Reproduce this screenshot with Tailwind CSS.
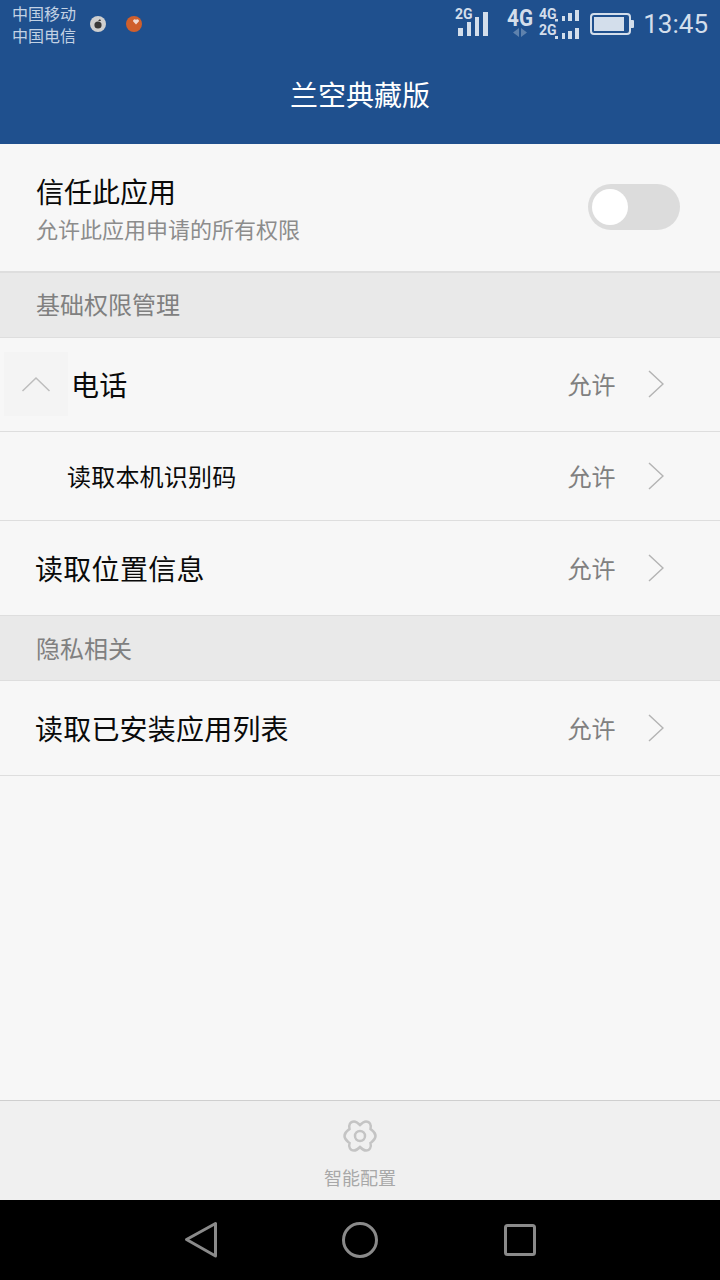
<!DOCTYPE html>
<html lang="zh-CN">
<head>
    <meta charset="UTF-8">
    <meta name="viewport" content="width=device-width, initial-scale=1.0">
    <title>兰空典藏版</title>
    <script src="https://cdn.jsdelivr.net/npm/@tailwindcss/browser@4"></script>
</head>
<body class="w-[720px] h-[1280px] overflow-hidden flex flex-col bg-[#f7f7f7] font-['Noto_Sans_CJK_SC','Liberation_Sans',sans-serif]">

    <!-- status bar + title -->
    <header class="h-[144px] shrink-0 bg-[#1f508e] flex flex-col">
        <div class="h-[48px] flex items-center pl-[12px] pr-[12px] text-[#c3d2e4]">
            <div class="text-[16px] leading-[22px] w-[64px]">
                <div>中国移动</div>
                <div>中国电信</div>
            </div>
            <svg class="ml-[13px] mb-[1px]" width="18" height="18" viewBox="0 0 18 18">
                <circle cx="9" cy="9" r="8" fill="#cfcfcf"/>
                <circle cx="9" cy="10" r="3.6" fill="#3a3a3a"/>
                <path d="M9 6l2-2 1 2z" fill="#3a3a3a"/>
            </svg>
            <svg class="ml-[18px] mb-[1px]" width="18" height="18" viewBox="0 0 18 18">
                <circle cx="9" cy="9" r="8" fill="#cf5f2c"/>
                <path d="M11 9.5L8 6.2a1.8 1.8 0 0 1 3-1.5 1.8 1.8 0 0 1 3 1.5z" fill="#efd9d2"/>
            </svg>
            <svg class="ml-auto" width="136" height="48" viewBox="0 0 136 48">
                <text x="1" y="19" font-size="14" font-weight="700" font-family="Roboto" fill="#d3deeb">2G</text>
                <g fill="#d3deeb">
                    <rect x="4" y="28" width="5" height="8"/>
                    <rect x="13" y="22" width="4" height="14"/>
                    <rect x="21" y="17" width="4" height="19"/>
                    <rect x="29" y="12" width="5" height="24"/>
                </g>
                <text x="53" y="26" font-size="24" font-weight="700" font-family="Roboto" textLength="26" lengthAdjust="spacingAndGlyphs" fill="#d3deeb">4G</text>
                <path d="M65 28v9l-6-4.500zM67 28v9l6-4.500z" fill="#5f82ad"/>
                <text x="85" y="19" font-size="14" font-weight="700" font-family="Roboto" fill="#d3deeb">4G</text>
                <text x="85" y="35" font-size="14" font-weight="700" font-family="Roboto" fill="#d3deeb">2G</text>
                <g fill="#d3deeb">
                    <rect x="101" y="19" width="3" height="2.500"/>
                    <rect x="108" y="16" width="3" height="5"/>
                    <rect x="114" y="13" width="4" height="8"/>
                    <rect x="121" y="10" width="4" height="11"/>
                    <rect x="101" y="36" width="3" height="3"/>
                    <rect x="108" y="33" width="3" height="6"/>
                    <rect x="114" y="31" width="4" height="8"/>
                    <rect x="121" y="28" width="4" height="11"/>
                </g>
            </svg>
            <svg class="ml-[-1px]" width="45" height="24" viewBox="0 0 45 24">
                <rect x="2" y="2" width="39" height="20" rx="3" fill="none" stroke="#d3deeb" stroke-width="2"/>
                <rect x="5" y="5" width="30" height="14" fill="#d3deeb"/>
                <path d="M42 8h2a1 1 0 0 1 1 1v6a1 1 0 0 1-1 1h-2z" fill="#d3deeb"/>
            </svg>
            <span class="ml-[9px] text-[26px] leading-[30px] font-['Roboto'] text-[#d3deeb]">13:45</span>
        </div>
        <h1 class="text-[28px] leading-[40px] mt-[26px] text-center text-white">兰空典藏版</h1>
    </header>

    <main class="flex-1 flex flex-col">
        <!-- trust switch -->
        <section class="h-[129px] shrink-0 flex items-center pl-[36px] pr-[40px] border-b-2 border-[#dedede]">
            <div class="flex-1">
                <div class="text-[28px] leading-[38px] text-[#0a0a0a]">信任此应用</div>
                <div class="text-[22px] leading-[32px] mt-[2px] text-[#8c8c8c]">允许此应用申请的所有权限</div>
            </div>
            <div class="w-[92px] h-[46px] rounded-full bg-[#dcdcdc] flex items-center pl-[4px] mb-[1px]">
                <div class="w-[36px] h-[36px] rounded-full bg-white"></div>
            </div>
        </section>

        <div class="h-[65px] shrink-0 flex items-center pl-[36px] pb-[2px] bg-[#e9e9e9] border-b border-[#dedede] text-[24px] text-[#808080]">基础权限管理</div>

        <div class="h-[94px] shrink-0 flex items-center pl-[4px] pr-[56px] pb-[2px] border-b border-[#dedede]">
            <div class="w-[64px] h-[64px] bg-[#f4f4f4] flex items-center justify-center">
                <svg width="30" height="18" viewBox="0 0 30 18"><path d="M1.500 16L15 3l13.500 13" fill="none" stroke="#bdbdbd" stroke-width="1.500"/></svg>
            </div>
            <span class="ml-[3px] text-[28px] tracking-[0.3px] text-[#0a0a0a] flex-1">电话</span>
            <span class="text-[24px] text-[#808080]">允许</span>
            <svg class="ml-[32.5px]" width="16" height="28" viewBox="0 0 16 28"><path d="M1 1l14 13L1 27" fill="none" stroke="#b4b4b4" stroke-width="1.500"/></svg>
        </div>

        <div class="h-[89px] shrink-0 flex items-center pl-[67px] pr-[56px] border-b border-[#dedede]">
            <span class="text-[24px] tracking-[0.2px] text-[#0a0a0a] flex-1">读取本机识别码</span>
            <span class="text-[24px] text-[#808080]">允许</span>
            <svg class="ml-[32.5px]" width="16" height="28" viewBox="0 0 16 28"><path d="M1 1l14 13L1 27" fill="none" stroke="#b4b4b4" stroke-width="1.500"/></svg>
        </div>

        <div class="h-[95px] shrink-0 flex items-center pl-[35px] pr-[56px] border-b border-[#dedede]">
            <span class="text-[28px] tracking-[0.3px] text-[#0a0a0a] flex-1">读取位置信息</span>
            <span class="text-[24px] text-[#808080]">允许</span>
            <svg class="ml-[32.5px]" width="16" height="28" viewBox="0 0 16 28"><path d="M1 1l14 13L1 27" fill="none" stroke="#b4b4b4" stroke-width="1.500"/></svg>
        </div>

        <div class="h-[65px] shrink-0 flex items-center pl-[36px] bg-[#e9e9e9] border-b border-[#dedede] text-[24px] text-[#808080]">隐私相关</div>

        <div class="h-[95px] shrink-0 flex items-center pl-[35px] pr-[56px] border-b border-[#dedede]">
            <span class="text-[28px] tracking-[0.2px] text-[#0a0a0a] flex-1">读取已安装应用列表</span>
            <span class="text-[24px] text-[#808080]">允许</span>
            <svg class="ml-[32.5px]" width="16" height="28" viewBox="0 0 16 28"><path d="M1 1l14 13L1 27" fill="none" stroke="#b4b4b4" stroke-width="1.500"/></svg>
        </div>
    </main>

    <!-- bottom action -->
    <footer class="h-[100px] shrink-0 bg-[#f0f0f0] border-t border-[#cfcfcf] flex flex-col items-center">
        <svg class="mt-[19px]" width="34" height="32" viewBox="0 0 34 32">
            <path d="M17 5C19 3 20.500 1.500 23 1.500C27 1.500 28.500 5 27.500 9C29 10.500 32.500 12 32.500 16C32.500 20 29 21.500 27.500 23C28.500 27 27 30.500 23 30.500C20.500 30.500 19 29 17 27C15 29 13.500 30.500 11 30.500C7 30.500 5.500 27 6.500 23C5 21.500 1.500 20 1.500 16C1.500 12 5 10.500 6.500 9C5.500 5 7 1.500 11 1.500C13.500 1.500 15 3 17 5z" fill="none" stroke="#c4c4c4" stroke-width="2.500"/>
            <circle cx="17" cy="16" r="5" fill="none" stroke="#c4c4c4" stroke-width="2.500"/>
        </svg>
        <span class="mt-[12px] text-[18px] leading-[26px] text-[#a8a8a8]">智能配置</span>
    </footer>

    <!-- navigation bar -->
    <nav class="h-[80px] shrink-0 bg-black flex items-center justify-center gap-[112px]">
        <svg width="56" height="40" viewBox="0 0 56 40"><path d="M43.500 3.500v32.500L14.500 19.500z" fill="none" stroke="#8a8a8a" stroke-width="3" stroke-linejoin="round"/></svg>
        <svg width="40" height="40" viewBox="0 0 40 40"><circle cx="20" cy="20" r="16.500" fill="none" stroke="#8a8a8a" stroke-width="3"/></svg>
        <svg width="56" height="40" viewBox="0 0 56 40"><rect x="13.500" y="5.500" width="29" height="29" rx="2" fill="none" stroke="#8a8a8a" stroke-width="3"/></svg>
    </nav>
</body>
</html>
